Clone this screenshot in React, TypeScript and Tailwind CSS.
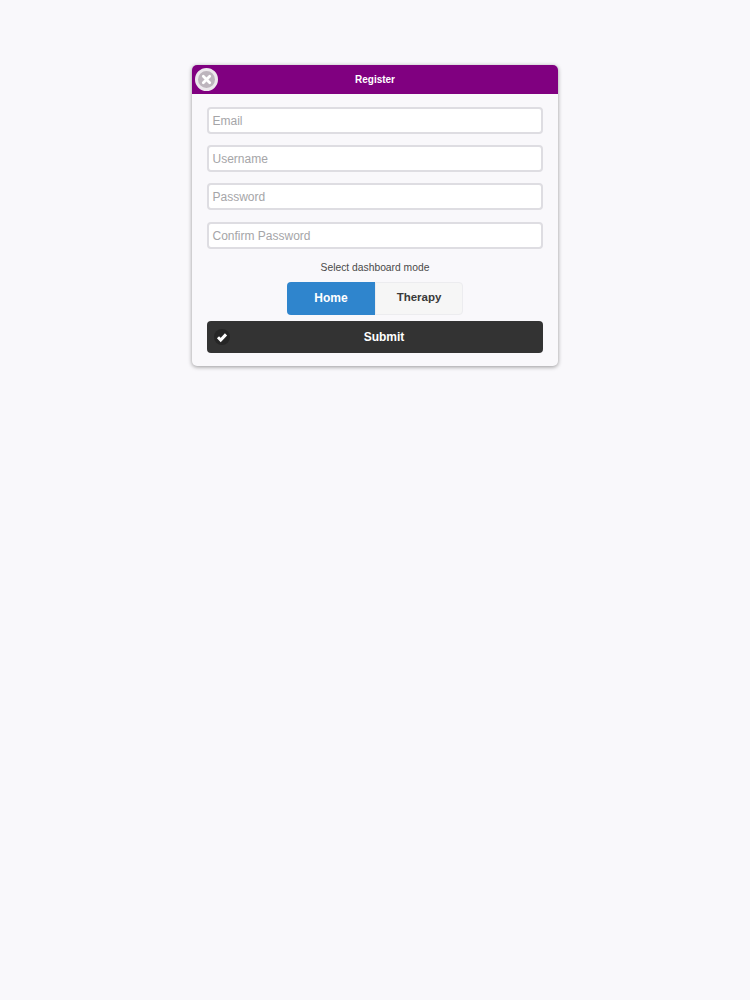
function Field({ placeholder, className }: { placeholder: string; className?: string }) {
    return (
        <div className={`h-[27px] rounded-[4px] border-2 border-[#dedde2] bg-white pl-[3.5px] pt-[1px] flex items-center text-[12px] text-[#a5a5a8] ${className ?? ""}`}>
            {placeholder}
        </div>
    );
}

export default function App() {
    return (
        <div className="min-h-[1000px] bg-[#f9f8fb] pt-[65px] font-['Liberation_Sans',Arial,sans-serif]">
            <div className="relative ml-[192px] w-[366px] rounded-[5px] bg-[#f9f8fb] shadow-[0_1px_4px_rgba(0,0,0,0.4)]">
                <div className="h-[29px] rounded-t-[5px] bg-[#800080] flex items-center justify-center text-[10px] font-bold text-white">
                    Register
                </div>
                <div className="absolute left-[3px] top-[3px] size-[23px] rounded-full bg-[#bdb5bd] border-[3px] border-[#ece8ec] flex items-center justify-center">
                    <svg viewBox="0 0 12 12" className="size-[11px]">
                        <path d="M2.5 2.5l7 7M9.5 2.5l-7 7" stroke="#fff" strokeWidth="3" strokeLinecap="round" />
                    </svg>
                </div>
                <div className="px-[15px] pt-[13px] pb-[13px]">
                    <div className="flex flex-col gap-[11px]">
                        <Field placeholder="Email" />
                        <Field placeholder="Username" />
                        <Field placeholder="Password" />
                        <Field placeholder="Confirm Password" className="mt-[1px]" />
                    </div>
                    <p className="mt-[13px] text-center text-[10.3px] leading-[12px] text-[#4a4a4a]">
                        Select dashboard mode
                    </p>
                    <div className="mt-[8px] flex justify-center">
                        <div className="flex h-[33px] w-[176px] font-bold">
                            <div className="w-[88px] rounded-l-[4px] bg-[#2f85cd] pb-[2px] text-[12px] text-white flex items-center justify-center">
                                Home
                            </div>
                            <div className="w-[88px] rounded-r-[4px] border border-[#ececef] bg-[#f6f6f6] pb-[2px] text-[11.5px] text-[#3a3a3a] flex items-center justify-center">
                                Therapy
                            </div>
                        </div>
                    </div>
                    <div className="relative mt-[6px] h-[32px] rounded-[4px] bg-[#333333] flex items-center justify-center pl-[18px] text-[12px] font-bold text-white">
                        Submit
                        <div className="absolute left-[7px] top-[8px] size-[16px] rounded-full bg-[#262626] flex items-center justify-center">
                            <svg viewBox="0 0 12 12" className="size-[12px]">
                                <path d="M2 6.3l2.7 2.7L10 3.4" fill="none" stroke="#fff" strokeWidth="3" />
                            </svg>
                        </div>
                    </div>
                </div>
            </div>
        </div>
    );
}
